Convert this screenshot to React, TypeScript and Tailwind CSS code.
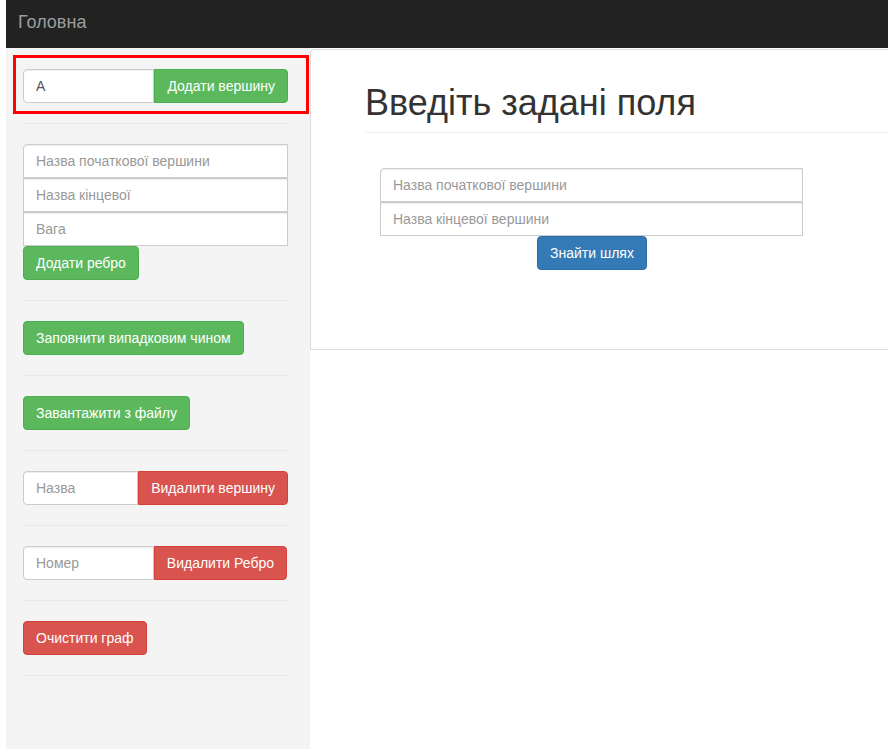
import React from "react";

const inputBase =
  "h-[34px] border border-[#ccc] bg-white px-[12px] py-[6px] text-[14px] leading-[20px] text-[#555] placeholder:text-[#999] shadow-[inset_0_1px_1px_rgba(0,0,0,0.075)] outline-none";

const btnBase =
  "h-[34px] px-[12px] py-[6px] text-[14px] leading-[20px] text-white whitespace-nowrap border";
const green = "bg-[#5cb85c] border-[#4cae4c]";
const red = "bg-[#d9534f] border-[#d43f3a]";
const blue = "bg-[#337ab7] border-[#2e6da4]";

function Section({ children }: { children: React.ReactNode }) {
  return <div className="pt-[20px] pb-[20px] border-b border-[#e8e8e8]">{children}</div>;
}

export default function App() {
  return (
    <div className="h-[749px] overflow-hidden bg-white pl-[6px] font-['Liberation_Sans',Arial,sans-serif] text-[14px] text-[#333]">
      <div className="h-[48px] bg-[#222222] pl-[12px] pt-[12px]">
        <span className="text-[18px] leading-[20px] text-[#9d9d9d]">Головна</span>
      </div>
      <div className="flex h-[701px]">
        <div className="w-[304px] shrink-0 bg-[#f4f4f4] pl-[17px] pr-[22px]">
          <div className="relative z-10 ml-[-10px] mt-[7px] w-[296px] border-[3px] border-[#ff0000] pl-[7px] pt-[11px] pb-[8px]">
            <div className="flex w-[265px]">
              <input className={`${inputBase} min-w-0 flex-1 rounded-l-[4px]`} defaultValue="A" />
              <button className={`${btnBase} ${green} rounded-r-[4px]`}>Додати вершину</button>
            </div>
          </div>
          <div className="mt-[9px] border-b border-[#e8e8e8]" />
          <Section>
            <div className="flex flex-col">
              <input className={`${inputBase} w-[265px] rounded-tl-[4px]`} placeholder="Назва початкової вершини" />
              <input className={`${inputBase} w-[265px]`} placeholder="Назва кінцевої" />
              <input className={`${inputBase} w-[265px]`} placeholder="Вага" />
            </div>
            <button className={`${btnBase} ${green} rounded-[4px]`}>Додати ребро</button>
          </Section>
          <Section>
            <button className={`${btnBase} ${green} rounded-[4px]`}>Заповнити випадковим чином</button>
          </Section>
          <Section>
            <button className={`${btnBase} ${green} rounded-[4px]`}>Завантажити з файлу</button>
          </Section>
          <Section>
            <div className="flex w-[265px]">
              <input className={`${inputBase} min-w-0 flex-1 rounded-l-[4px]`} placeholder="Назва" />
              <button className={`${btnBase} ${red} rounded-r-[4px]`}>Видалити вершину</button>
            </div>
          </Section>
          <Section>
            <div className="flex w-[264px]">
              <input className={`${inputBase} min-w-0 flex-1 rounded-l-[4px]`} placeholder="Номер" />
              <button className={`${btnBase} ${red} rounded-r-[4px]`}>Видалити Ребро</button>
            </div>
          </Section>
          <Section>
            <button className={`${btnBase} ${red} rounded-[4px]`}>Очистити граф</button>
          </Section>
        </div>
        <div className="mt-[1px] h-[301px] w-[640px] shrink-0 rounded-tl-[4px] border-l border-t border-b border-[#ddd] bg-white pl-[54px] pt-[33px] pb-[79px]">
          <div className="border-b border-[#eee] pb-[9px]">
            <h1 className="h-[40px] text-[36px] leading-[40px] font-normal text-[#333]">Введіть задані поля</h1>
          </div>
          <div className="ml-[15px] mt-[35px] flex w-[423px] flex-col items-center">
            <input className={`${inputBase} w-[423px] rounded-tl-[4px]`} placeholder="Назва початкової вершини" />
            <input className={`${inputBase} w-[423px]`} placeholder="Назва кінцевої вершини" />
            <button className={`${btnBase} ${blue} rounded-[4px] ml-[1px]`}>Знайти шлях</button>
          </div>
        </div>
      </div>
    </div>
  );
}
